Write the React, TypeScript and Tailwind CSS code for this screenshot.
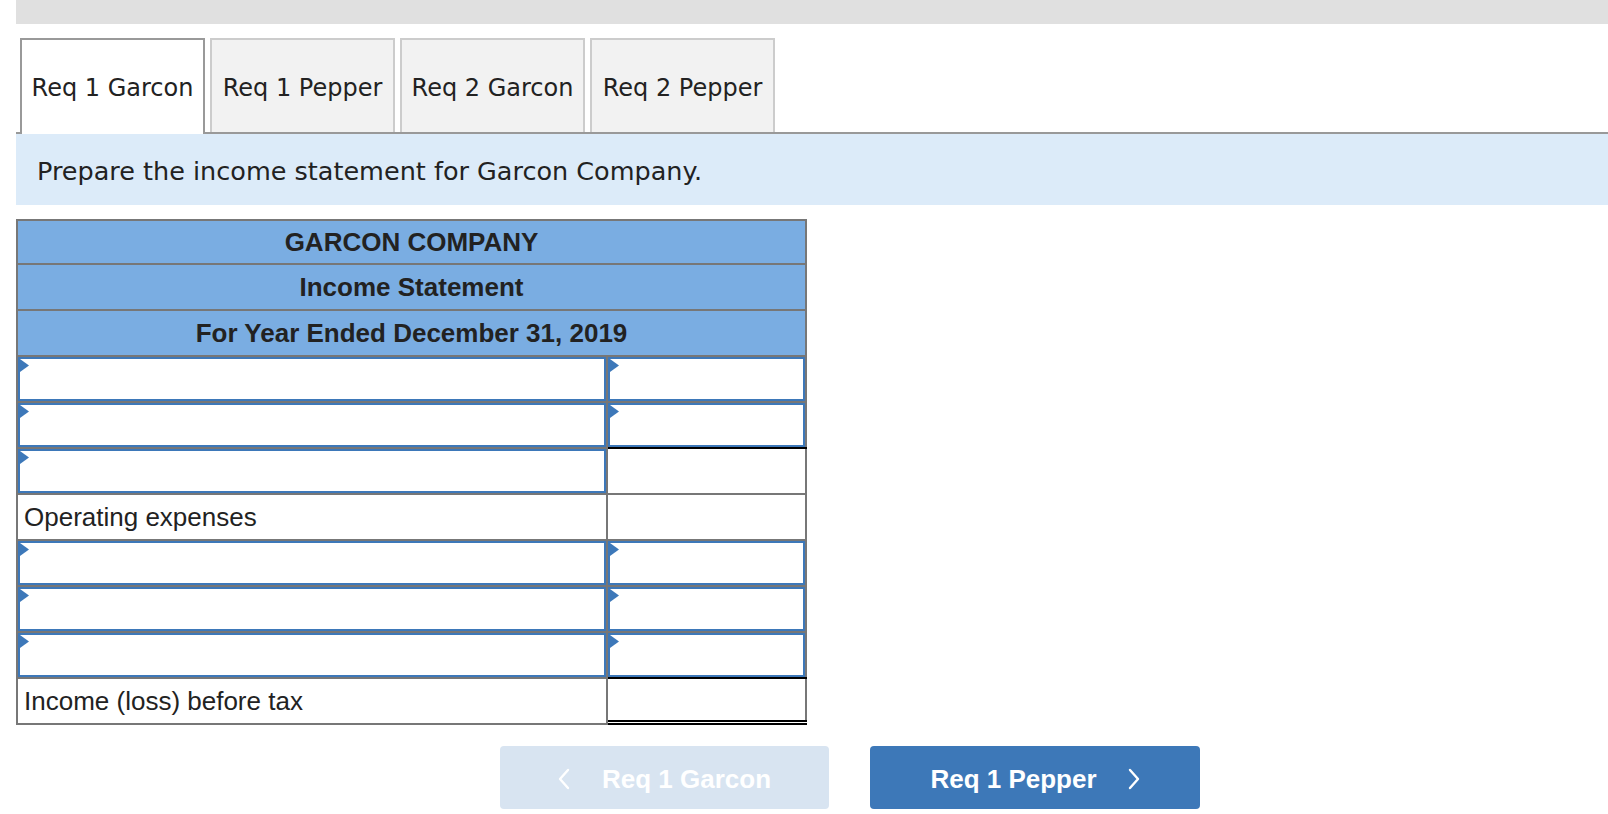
import React from "react";

const tabs = ["Req 1 Garcon", "Req 1 Pepper", "Req 2 Garcon", "Req 2 Pepper"];

type Cell = "input" | "empty" | "underline" | "total";

const rows: { left: string | null; right: Cell }[] = [
  { left: null, right: "input" },
  { left: null, right: "underline" },
  { left: null, right: "empty" },
  { left: "Operating expenses", right: "empty" },
  { left: null, right: "input" },
  { left: null, right: "input" },
  { left: null, right: "input" },
  { left: "Income (loss) before tax", right: "total" },
];

const InputBox = () => (
  <div className="relative h-full w-full border-2 border-[#3d78b9] bg-white">
    <svg className="absolute left-0 top-0" width="9" height="13" viewBox="0 0 9 13">
      <polygon points="0,0 9,6.5 0,13" fill="#3d78b9" />
    </svg>
  </div>
);

const Chevron = ({ dir }: { dir: "left" | "right" }) => (
  <svg width="12" height="22" viewBox="0 0 12 22" fill="none">
    <polyline
      points={dir === "left" ? "10,2 2,11 10,20" : "2,2 10,11 2,20"}
      stroke="white"
      strokeWidth="2.4"
      strokeLinecap="round"
      strokeLinejoin="round"
    />
  </svg>
);

export default function App() {
  return (
    <div className="min-h-screen bg-white pl-[16px] text-[#222]">
      <div className="h-[24px] bg-[#e0e0e0]" />

      {/* tabs */}
      <div className="mt-[14px] flex gap-[5px] border-b-2 border-[#999] pl-[4px] font-['DejaVu_Sans',Verdana,sans-serif] text-[24px]">
        {tabs.map((t, i) =>
          i === 0 ? (
            <div
              key={t}
              className="-mb-[2px] flex h-[96px] w-[185px] items-center justify-center border-2 border-b-0 border-[#999] bg-white pt-[2px]"
            >
              {t}
            </div>
          ) : (
            <div
              key={t}
              className="flex h-[94px] w-[185px] items-center justify-center border-2 border-b-0 border-[#ccc] bg-[#f2f2f2] pt-[4px]"
            >
              {t}
            </div>
          )
        )}
      </div>

      <div className="flex h-[71px] items-center bg-[#dcebf9] pl-[21px] pt-[3px] font-['DejaVu_Sans',Verdana,sans-serif] text-[25.5px]">
        Prepare the income statement for Garcon Company.
      </div>

      {/* statement */}
      <div className="mt-[14px] w-[791px] border-2 border-[#777] font-['Liberation_Sans',Arial,sans-serif] text-[26px]">
        <div className="flex h-[44px] items-center justify-center border-b-2 border-[#777] bg-[#7aade2] font-bold">
          GARCON COMPANY
        </div>
        <div className="flex h-[46px] items-center justify-center border-b-2 border-[#777] bg-[#7aade2] font-bold">
          Income Statement
        </div>
        <div className="flex h-[46px] items-center justify-center border-b-2 border-[#777] bg-[#7aade2] font-bold">
          For Year Ended December 31, 2019
        </div>
        {rows.map((r, i) => {
          const last = i === rows.length - 1;
          return (
            <div
              key={i}
              className={last ? "flex h-[44px]" : "flex h-[46px] border-b-2 border-[#777]"}
            >
              <div className="flex w-[590px] shrink-0 items-center border-r-2 border-[#777]">
                {r.left ? <span className="pl-[6px]">{r.left}</span> : <InputBox />}
              </div>
              <div className="relative flex-1">
                {(r.right === "input" || r.right === "underline") && <InputBox />}
                {r.right === "underline" && (
                  <div className="absolute -bottom-[2px] left-0 -right-[2px] h-[2px] bg-black" />
                )}
                {r.right === "total" && (
                  <>
                    <div className="absolute -top-[2px] left-0 -right-[2px] h-[2px] bg-black" />
                    <div className="absolute -bottom-[2px] left-0 -right-[2px] h-[5px] border-y-2 border-black bg-white" />
                  </>
                )}
              </div>
            </div>
          );
        })}
      </div>

      {/* navigation */}
      <div className="mt-[21px] flex gap-[41px] pl-[484px] font-['Liberation_Sans',Arial,sans-serif] text-[26px] font-bold text-white">
        <button className="flex h-[63px] w-[329px] items-center justify-center gap-[32px] rounded-[4px] bg-[#d8e4f1] pt-[3px]">
          <Chevron dir="left" />
          <span>Req 1 Garcon</span>
        </button>
        <button className="flex h-[63px] w-[330px] items-center justify-center gap-[31px] rounded-[4px] bg-[#3d78b8] pt-[3px]">
          <span>Req 1 Pepper</span>
          <Chevron dir="right" />
        </button>
      </div>
    </div>
  );
}
